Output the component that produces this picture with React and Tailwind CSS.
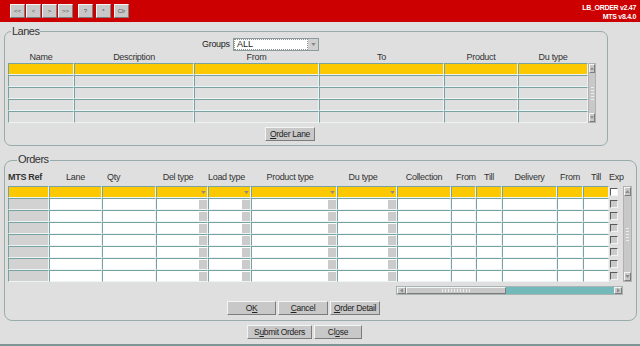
import React from "react";

const CELL = "border border-t-[#78a2a2] border-l-[#78a2a2] border-b-[#eef3f3] border-r-[#eef3f3]";
const RAISED = "bg-[#c8c8c8] border border-t-[#f4f4f4] border-l-[#f4f4f4] border-b-[#7c7c7c] border-r-[#7c7c7c]";

function Tri({ dir = "down", className = "" }) {
  const pts = { down: "0,0 6,0 3,4", up: "0,4 6,4 3,0", left: "4,0 4,6 0,3", right: "0,0 0,6 4,3" }[dir];
  const vb = dir === "down" || dir === "up" ? "0 0 6 4" : "0 0 4 6";
  const size = dir === "down" || dir === "up" ? "w-[5px] h-[3px]" : "w-[3px] h-[5px]";
  return (
    <svg viewBox={vb} className={`${size} ${className}`}>
      <polygon points={pts} fill="#8a8a8a" />
    </svg>
  );
}

function TB({ children }) {
  return (
    <div className={`w-[15px] h-[14px] flex items-center justify-center ${RAISED} text-[6px] leading-none text-[#555]`}>
      {children}
    </div>
  );
}

function Btn({ className = "", children }) {
  return (
    <div className={`h-[14px] flex items-center justify-center ${RAISED} text-[8.5px] leading-none tracking-[-0.3px] text-[#222] ${className}`}>
      {children}
    </div>
  );
}

const laneCols = [
  ["Name", "w-[66px]"],
  ["Description", "w-[120px]"],
  ["From", "w-[125px]"],
  ["To", "w-[125px]"],
  ["Product", "w-[74px]"],
  ["Du type", "w-[70px]"],
];

// [label, width class, kind, header align]
const orderCols = [
  ["MTS Ref", "w-[41px]", "ref", "ref"],
  ["Lane", "w-[53px]", "text", "c"],
  ["Qty", "w-[54px]", "text", "l"],
  ["Del type", "w-[52px]", "drop", "c"],
  ["Load type", "w-[43px]", "drop", "c"],
  ["Product type", "w-[86px]", "drop", "c"],
  ["Du type", "w-[60px]", "drop", "c"],
  ["Collection", "w-[54px]", "text", "c"],
  ["From", "w-[25px]", "text", "l"],
  ["Till", "w-[26px]", "text", "c"],
  ["Delivery", "w-[55px]", "text", "c"],
  ["From", "w-[26px]", "text", "c"],
  ["Till", "w-[26px]", "text", "c"],
];

function Grip({ vertical }) {
  return vertical ? (
    <div className="flex flex-col gap-[2px] items-center">
      {[0, 1, 2, 3, 4].map((i) => (
        <div key={i} className="w-[3px] h-[1px] bg-[#eeeeee]" />
      ))}
    </div>
  ) : (
    <div className="flex gap-[2px] items-center">
      {[0, 1, 2, 3, 4, 5, 6, 7, 8, 9].map((i) => (
        <div key={i} className="w-[1px] h-[3px] bg-[#eeeeee]" />
      ))}
    </div>
  );
}

function VScroll({ className = "" }) {
  return (
    <div className={`flex flex-col bg-[#c8c8c8] border border-[#b0b0b0] ${className}`}>
      <div className={`h-[9px] flex items-center justify-center ${RAISED}`}>
        <Tri dir="up" />
      </div>
      <div className="flex-1 flex items-center justify-center">
        <Grip vertical />
      </div>
      <div className={`h-[9px] flex items-center justify-center ${RAISED}`}>
        <Tri dir="down" />
      </div>
    </div>
  );
}

function U({ children }) {
  return <span className="underline underline-offset-1">{children}</span>;
}

export default function App() {
  const laneRows = [0, 1, 2, 3, 4];
  const orderRows = [0, 1, 2, 3, 4, 5, 6, 7];
  return (
    <div className="w-[640px] h-[346px] overflow-hidden bg-[#dfdfdf] border-b-2 border-[#7d9595] font-['Liberation_Sans',Arial,sans-serif] text-[#222] flex flex-col">
      {/* Header bar */}
      <div className="h-[22px] shrink-0 bg-[#cc0000] flex justify-between">
        <div className="flex pl-[10px] pt-[4px]">
          <div className="flex gap-[1px]">
            <TB>&lt;&lt;</TB>
            <TB>&lt;</TB>
            <TB>&gt;</TB>
            <TB>&gt;&gt;</TB>
          </div>
          <div className="flex gap-[3px] ml-[5px]">
            <TB>?</TB>
            <TB>*</TB>
            <TB>Clr</TB>
          </div>
        </div>
        <div className="pr-[4px] pt-[3px] text-right text-white font-bold text-[7px] leading-[9px] tracking-[-0.3px]">
          <div>LB_ORDER v2.47</div>
          <div>MTS v8.4.0</div>
        </div>
      </div>

      {/* Lanes group */}
      <div className="relative ml-[4px] mt-[9px] w-[604px] h-[115px] shrink-0 border border-[#98acac] rounded-[7px]">
        <span className="absolute left-[6px] top-[-7px] px-[1px] bg-[#dfdfdf] text-[11px] leading-[12px] tracking-[-0.5px] text-[#333]">
          Lanes
        </span>
        <div className="flex items-center mt-[6px] pl-[197px] h-[13px]">
          <span className="text-[9px] tracking-[-0.3px] w-[30px]">Groups</span>
          <div className="ml-[1px] w-[86px] h-[13px] flex bg-white border border-[#8c9c9c]">
            <div className="flex-1 text-[9px] leading-[9px] pl-[2px] border border-dotted border-[#909090]">ALL</div>
            <div className="w-[10px] bg-[#d0d0d0] flex items-center justify-center">
              <Tri />
            </div>
          </div>
        </div>
        <div className="mt-[1px] h-[11px] flex pl-[3px]">
          {laneCols.map(([l, w]) => (
            <div key={l} className={`${w} text-center text-[9px] leading-[11px] tracking-[-0.3px] text-[#333]`}>
              {l}
            </div>
          ))}
        </div>
        <div className="flex pl-[3px]">
          <div className="flex flex-col">
            {laneRows.map((r) => (
              <div key={r} className="flex">
                {laneCols.map(([l, w]) => (
                  <div key={l} className={`${w} h-[12px] ${CELL} ${r === 0 ? "bg-[#fcc800]" : "bg-[#dfdfdf]"}`} />
                ))}
              </div>
            ))}
          </div>
          <VScroll className="w-[8px] h-[60px]" />
        </div>
        <Btn className="mt-[4px] ml-[260px] w-[50px]">
          <span><U>O</U>rder Lane</span>
        </Btn>
      </div>

      {/* Orders group */}
      <div className="relative ml-[4px] mt-[14px] w-[633px] h-[161px] shrink-0 border border-[#98acac] rounded-[8px]">
        <span className="absolute left-[12px] top-[-8px] px-[1px] bg-[#dfdfdf] text-[11px] leading-[12px] tracking-[-0.5px] text-[#333]">
          Orders
        </span>
        <div className="mt-[9px] h-[14px] flex pl-[3px] items-center">
          {orderCols.map(([l, w, kind, al], i) => (
            <div
              key={i}
              className={`${w} text-[9px] leading-[11px] tracking-[-0.3px] text-[#333] whitespace-nowrap ${
                al === "ref" ? "font-bold text-left text-[#111]" : al === "l" ? "text-left pl-[5px]" : "text-center"
              } ${kind === "drop" ? "pr-[8px]" : ""}`}
            >
              {l}
            </div>
          ))}
          <div className="w-[14px] text-[9px] leading-[11px] tracking-[-0.3px] text-[#333]">Exp</div>
        </div>
        <div className="mt-[2px] flex pl-[3px]">
          <div className="flex flex-col">
            {orderRows.map((r) => (
              <div key={r} className="flex">
                {orderCols.map(([l, w, kind], i) => {
                  const bg = r === 0 ? "bg-[#fcc800]" : kind === "ref" ? "bg-[#d2d2d2]" : "bg-white";
                  return (
                    <div key={i} className={`${w} h-[12px] ${CELL} ${bg} flex justify-end items-center`}>
                      {kind === "drop" &&
                        (r === 0 ? (
                          <div className="w-[8px] h-[9px] flex items-center justify-center">
                            <Tri />
                          </div>
                        ) : (
                          <div className="w-[8px] h-[9px] bg-[#cbcbcb]" />
                        ))}
                    </div>
                  );
                })}
                <div className="w-[14px] h-[12px] flex items-center">
                  <div
                    className={`ml-[1px] w-[8px] h-[8px] border border-t-[#5a5a5a] border-l-[#5a5a5a] border-b-[#f4f4f4] border-r-[#f4f4f4] ${
                      r === 0 ? "bg-white" : "bg-[#cacaca]"
                    }`}
                  />
                </div>
              </div>
            ))}
          </div>
          <VScroll className="w-[9px] h-[96px]" />
        </div>
        {/* Horizontal scrollbar */}
        <div className="mt-[4px] ml-[391px] w-[227px] h-[9px] flex border border-[#a8b4b4] bg-[#74b9b9]">
          <div className={`w-[9px] flex items-center justify-center ${RAISED}`}>
            <Tri dir="left" />
          </div>
          <div className={`w-[100px] flex items-center justify-center ${RAISED}`}>
            <Grip />
          </div>
          <div className="flex-1" />
          <div className={`w-[8px] flex items-center justify-center ${RAISED}`}>
            <Tri dir="right" />
          </div>
        </div>
        <div className="mt-[6px] flex pl-[222px] gap-[2px]">
          <Btn className="w-[49px]">
            <span>O<U>K</U></span>
          </Btn>
          <Btn className="w-[50px]">
            <span><U>C</U>ancel</span>
          </Btn>
          <Btn className="w-[50px]">
            <span><U>O</U>rder Detail</span>
          </Btn>
        </div>
      </div>

      {/* Bottom buttons */}
      <div className="mt-[4px] flex pl-[247px] gap-[2px]">
        <Btn className="w-[65px]">
          <span>S<U>u</U>bmit Orders</span>
        </Btn>
        <Btn className="w-[48px]">
          <span>Cl<U>o</U>se</span>
        </Btn>
      </div>
    </div>
  );
}
